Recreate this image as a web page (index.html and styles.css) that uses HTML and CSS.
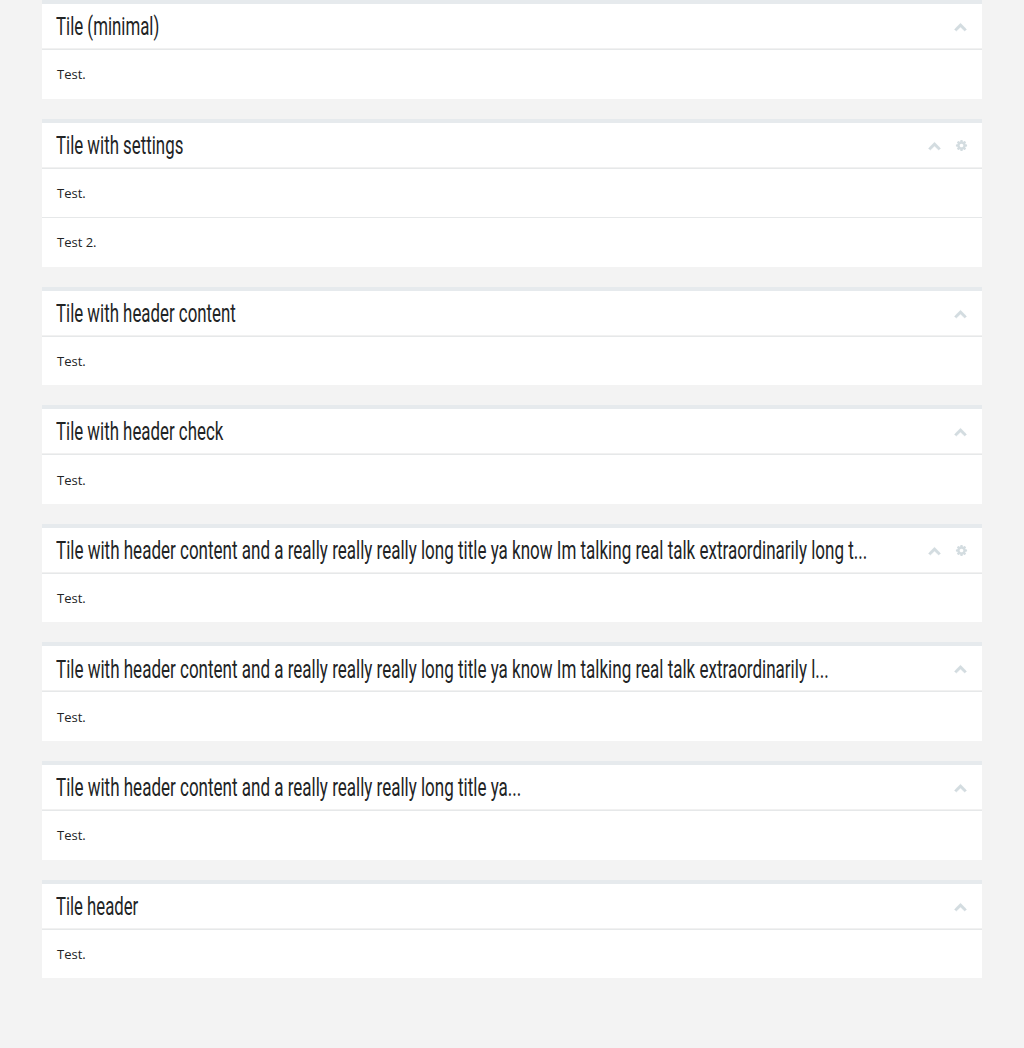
FILE: index.html
```html
<!DOCTYPE html>
<html lang="en">
<head>
<meta charset="utf-8">
<title>Tiles</title>
<link rel="stylesheet" href="styles.css">
</head>
<body>
<svg class="sprite" aria-hidden="true">
  <symbol id="chevron" viewBox="0 0 1792 1792"><path d="M1683 1331l-166 165q-19 19-45 19t-45-19l-531-531-531 531q-19 19-45 19t-45-19l-166-165q-19-19-19-45.5t19-45.5l742-741q19-19 45-19t45 19l742 741q19 19 19 45.5t-19 45.5z"/></symbol>
  <symbol id="cog" viewBox="0 0 1792 1792"><path d="M1152 896q0-106-75-181t-181-75-181 75-75 181 75 181 181 75 181-75 75-181zm512-109v222q0 12-8 23t-20 13l-185 28q-19 54-39 91 35 50 107 138 10 12 10 25t-9 23q-27 37-99 108t-94 71q-12 0-26-9l-138-108q-44 23-91 38-16 136-29 186-7 28-36 28h-222q-14 0-24.5-8.5t-11.5-21.5l-28-184q-49-16-90-37l-141 107q-10 9-25 9-14 0-25-11-126-114-165-168-7-10-7-23 0-12 8-23 15-21 51-66.5t54-70.5q-27-50-41-99l-183-27q-13-2-21-12.5t-8-23.5v-222q0-12 8-23t19-13l186-28q14-46 39-92-40-57-107-138-10-12-10-24 0-10 9-23 26-36 98.5-107.5t94.5-71.5q13 0 26 10l138 107q44-23 91-38 16-136 29-186 7-28 36-28h222q14 0 24.5 8.5t11.5 21.5l28 184q49 16 90 37l142-107q9-9 24-9 13 0 25 10 129 119 165 170 7 8 7 22 0 12-8 23-15 21-51 66.5t-54 70.5q26 50 41 98l183 28q13 2 21 12.5t8 23.5z"/></symbol>
</svg>
<main class="page">
  <section class="tile">
    <header class="tile-header"><h2 class="tile-title">Tile (minimal)</h2><div class="tile-tools"><svg class="icon chevron"><use href="#chevron"/></svg></div></header>
    <div class="tile-body">Test.</div>
  </section>
  <section class="tile">
    <header class="tile-header"><h2 class="tile-title">Tile with settings</h2><div class="tile-tools with-cog"><svg class="icon chevron"><use href="#chevron"/></svg><svg class="icon"><use href="#cog"/></svg></div></header>
    <div class="tile-body">Test.</div>
    <div class="tile-body">Test 2.</div>
  </section>
  <section class="tile">
    <header class="tile-header"><h2 class="tile-title">Tile with header content</h2><div class="tile-tools"><svg class="icon chevron"><use href="#chevron"/></svg></div></header>
    <div class="tile-body">Test.</div>
  </section>
  <section class="tile">
    <header class="tile-header"><h2 class="tile-title">Tile with header check</h2><div class="tile-tools"><svg class="icon chevron"><use href="#chevron"/></svg></div></header>
    <div class="tile-body">Test.</div>
  </section>
  <section class="tile">
    <header class="tile-header"><h2 class="tile-title long">Tile with header content and a really really really long title ya know Im talking real talk extraordinarily long t...</h2><div class="tile-tools with-cog"><svg class="icon chevron"><use href="#chevron"/></svg><svg class="icon"><use href="#cog"/></svg></div></header>
    <div class="tile-body">Test.</div>
  </section>
  <section class="tile">
    <header class="tile-header"><h2 class="tile-title long">Tile with header content and a really really really long title ya know Im talking real talk extraordinarily l...</h2><div class="tile-tools"><svg class="icon chevron"><use href="#chevron"/></svg></div></header>
    <div class="tile-body">Test.</div>
  </section>
  <section class="tile">
    <header class="tile-header"><h2 class="tile-title long">Tile with header content and a really really really long title ya...</h2><div class="tile-tools"><svg class="icon chevron"><use href="#chevron"/></svg></div></header>
    <div class="tile-body">Test.</div>
  </section>
  <section class="tile">
    <header class="tile-header"><h2 class="tile-title short">Tile header</h2><div class="tile-tools"><svg class="icon chevron"><use href="#chevron"/></svg></div></header>
    <div class="tile-body">Test.</div>
  </section>
</main>
</body>
</html>
```
FILE: styles.css
```css
* { box-sizing: border-box; }

body {
  margin: 0;
  background: #f3f3f3;
  color: #222425;
  font: 13px/1.428571 "Open Sans", sans-serif;
}

.sprite { display: none; }

.page {
  width: 940px;
  min-height: 1048px;
  margin: 0 auto;
}

.tile {
  margin-bottom: 20px;
  border-top: 4px solid #e6eaed;
  background: #fff;
}

.tile-header {
  display: flex;
  justify-content: space-between;
  height: 45px;
  padding: 0.125px 15px 0 14px;
  border-bottom: 1px solid #f1f1f1;
}

/* The condensed headline face is set by narrowing the regular one. */
.tile-title {
  --squeeze: 0.636;
  flex: 0 0 auto;
  width: 0;
  margin: 0;
  font: 400 26.5px/44px Roboto, sans-serif;
  white-space: nowrap;
  transform: scaleX(var(--squeeze));
  transform-origin: 0 0;
}

.tile-title.long { --squeeze: 0.642; }
.tile-title.short { --squeeze: 0.631; }

.tile-tools {
  display: flex;
  gap: 14px;
  padding-top: 15.875px;
}

.tile-tools.with-cog { margin-right: -0.5px; }

.icon {
  width: 13px;
  height: 13px;
  fill: #d3dce0;
}

.icon.chevron {
  stroke: #d3dce0;
  stroke-width: 60px;
}

.tile-body {
  padding: 15.28125px 15px 14.71875px;
  border-top: 1px solid #e6e8e9;
}
```
